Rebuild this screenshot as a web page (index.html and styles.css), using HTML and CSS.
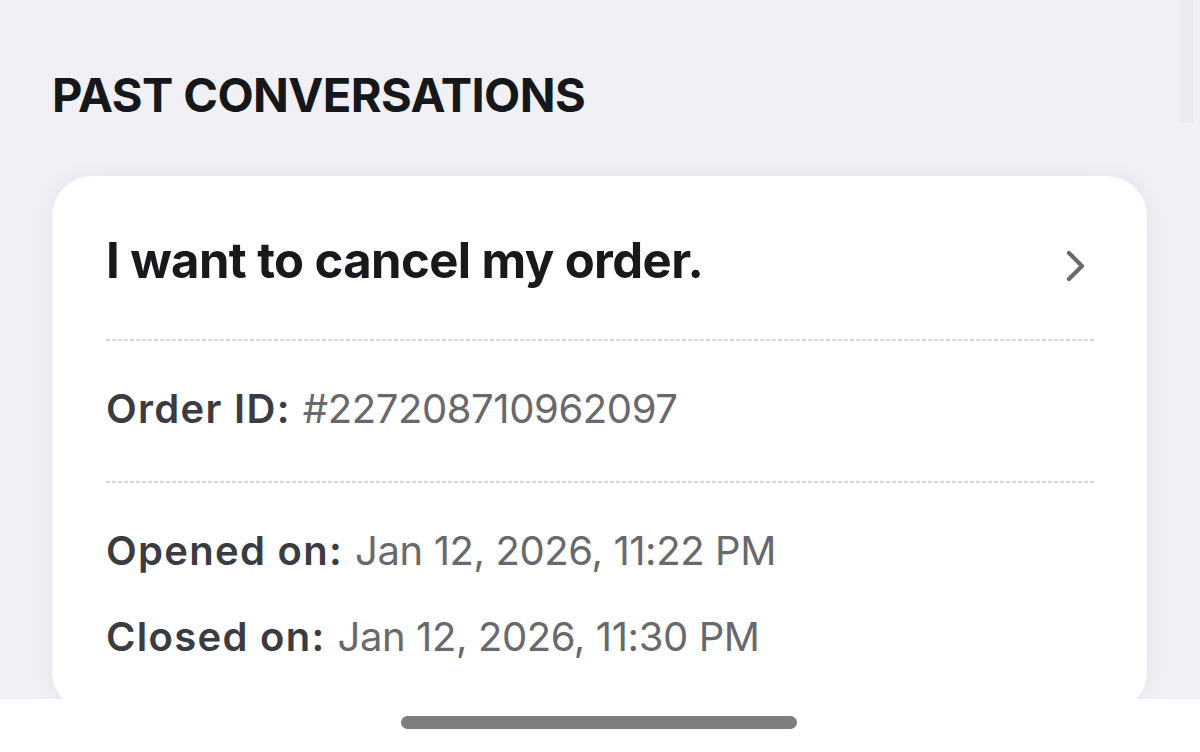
FILE: index.html
```html
<!DOCTYPE html>
<html lang="en">
<head>
<meta charset="utf-8">
<title>Past Conversations</title>
<link rel="stylesheet" href="styles.css">
</head>
<body>
<div class="scroll-thumb"></div>
<main class="page">
  <h1 class="section-title">PAST CONVERSATIONS</h1>
  <section class="card">
    <div class="card-head">
      <h2 class="card-title">I want to cancel my order.</h2>
      <svg class="chevron" width="24" height="36" viewBox="0 0 24 36" aria-hidden="true">
        <path d="M5 5 L18 18 L5 31" fill="none" stroke="#6a6a6e" stroke-width="4.2" stroke-linecap="round" stroke-linejoin="round"/>
      </svg>
    </div>
    <div class="divider"></div>
    <div class="row order-row">
      <span class="label">Order ID:</span>
      <span class="value">#227208710962097</span>
    </div>
    <div class="divider"></div>
    <div class="dates">
      <div class="row">
        <span class="label">Opened on:</span>
        <span class="value">Jan 12, 2026, 11:22 PM</span>
      </div>
      <div class="row">
        <span class="label">Closed on:</span>
        <span class="value">Jan 12, 2026, 11:30 PM</span>
      </div>
    </div>
  </section>
</main>
<div class="home-bar"><div class="home-indicator"></div></div>
</body>
</html>
```
FILE: styles.css
```css
html, body {
  margin: 0;
  padding: 0;
}
body {
  width: 1200px;
  height: 752px;
  overflow: hidden;
  background: #f1f0f5;
  font-family: "Inter", "Noto Sans", sans-serif;
}
.page {
  padding: 0 53px 0 52px;
}
.section-title {
  margin: 0;
  padding-top: 67px;
  height: 176px;
  box-sizing: border-box;
  font-size: 47px;
  line-height: 56px;
  font-weight: 700;
  letter-spacing: -0.6px;
  color: #16171b;
}
.card {
  background: #ffffff;
  border-radius: 40px;
  padding: 0 53px 0 54px;
  height: 536px;
  box-shadow: 0 0 18px rgba(200, 200, 210, 0.35);
}
.card-head {
  display: flex;
  align-items: center;
  justify-content: space-between;
  padding: 57px 0 50px;
}
.card-title {
  margin: 0;
  font-size: 49px;
  line-height: 56px;
  font-weight: 700;
  letter-spacing: -0.6px;
  color: #18191d;
}
.chevron {
  margin: 10px 6px 0 0;
}
.divider {
  height: 2px;
  background: repeating-linear-gradient(to right, #d7d7db 0 4px, transparent 4px 6px);
}
.row {
  display: flex;
  gap: 12px;
  font-size: 40px;
  line-height: 48px;
}
.order-row {
  padding: 44px 0 48px;
}
.dates {
  padding-top: 44px;
  display: flex;
  flex-direction: column;
  gap: 38px;
}
.label {
  font-weight: 600;
  letter-spacing: 1.3px;
  color: #3b3c42;
}
.value {
  font-weight: 400;
  letter-spacing: -0.4px;
  color: #68686d;
}
.scroll-thumb {
  position: absolute;
  left: 1180px;
  top: 0;
  width: 13px;
  height: 123px;
  background: #eaeaef;
}
.home-bar {
  position: fixed;
  left: 0;
  right: 0;
  bottom: 0;
  height: 53px;
  background: #ffffff;
}
.home-indicator {
  position: absolute;
  left: 401px;
  top: 17px;
  width: 396px;
  height: 13px;
  border-radius: 7px;
  background: #7e7e7e;
}
```
